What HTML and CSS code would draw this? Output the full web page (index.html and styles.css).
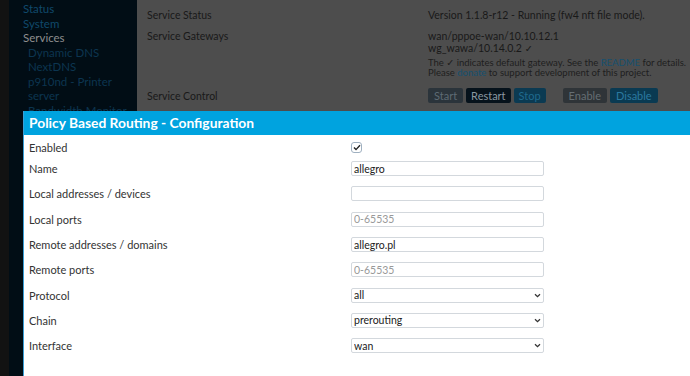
FILE: index.html
```html
<!DOCTYPE html>
<html lang="en">
<head>
    <meta charset="UTF-8">
    <title>Policy Based Routing</title>
    <link rel="stylesheet" href="styles.css">
</head>
<body>
    <div class="page">
        <div class="edge"></div>

        <nav class="sidebar">
            <a class="menu">Status</a>
            <a class="menu">System</a>
            <a class="menu active">Services</a>
            <a class="submenu">Dynamic DNS</a>
            <a class="submenu">NextDNS</a>
            <a class="submenu">p910nd - Printer</a>
            <a class="submenu">server</a>
            <a class="submenu">Bandwidth Monitor</a>
        </nav>

        <div class="main">
            <div class="status-row">
                <div class="status-label">Service Status</div>
                <div class="status-value">Version 1.1.8-r12 - Running (fw4 nft file mode).</div>
            </div>
            <div class="status-row gateways">
                <div class="status-label">Service Gateways</div>
                <div class="status-value">
                    <div>wan/pppoe-wan/10.10.12.1</div>
                    <div>wg_wawa/10.14.0.2 <span class="tick">✓</span></div>
                    <div class="note first">The <span class="tick">✓</span> indicates default gateway. See the <a class="link">README</a> for details.</div>
                    <div class="note">Please <a class="link">donate</a> to support development of this project.</div>
                </div>
            </div>
            <div class="status-row control">
                <div class="status-label">Service Control</div>
                <div class="status-value buttons">
                    <button class="btn btn-start">Start</button>
                    <button class="btn btn-restart">Restart</button>
                    <button class="btn btn-stop">Stop</button>
                    <button class="btn btn-enable spaced">Enable</button>
                    <button class="btn btn-disable">Disable</button>
                </div>
            </div>
        </div>
    </div>

    <div class="modal">
        <h3 class="modal-title">Policy Based Routing - Configuration</h3>
        <div class="form">
            <div class="row first-row">
                <label class="label">Enabled</label>
                <span class="checkbox">
                    <svg width="8" height="7" viewBox="0 0 8 7"><path d="M1 3.6 L3 5.6 L7 1.2" fill="none" stroke="#222" stroke-width="1.4"/></svg>
                </span>
            </div>
            <div class="row">
                <label class="label">Name</label>
                <input class="field" type="text" value="allegro">
            </div>
            <div class="row">
                <label class="label">Local addresses / devices</label>
                <input class="field" type="text">
            </div>
            <div class="row">
                <label class="label">Local ports</label>
                <input class="field" type="text" placeholder="0-65535">
            </div>
            <div class="row">
                <label class="label">Remote addresses / domains</label>
                <input class="field" type="text" value="allegro.pl">
            </div>
            <div class="row">
                <label class="label">Remote ports</label>
                <input class="field" type="text" placeholder="0-65535">
            </div>
            <div class="row">
                <label class="label">Protocol</label>
                <div class="select-wrap">
                    <select class="field select"><option>all</option></select>
                    <svg class="chevron" width="7" height="5" viewBox="0 0 7 5"><path d="M1 1.2 L3.5 3.6 L6 1.2" fill="none" stroke="#333" stroke-width="1.3"/></svg>
                </div>
            </div>
            <div class="row">
                <label class="label">Chain</label>
                <div class="select-wrap">
                    <select class="field select"><option>prerouting</option></select>
                    <svg class="chevron" width="7" height="5" viewBox="0 0 7 5"><path d="M1 1.2 L3.5 3.6 L6 1.2" fill="none" stroke="#333" stroke-width="1.3"/></svg>
                </div>
            </div>
            <div class="row">
                <label class="label">Interface</label>
                <div class="select-wrap">
                    <select class="field select"><option>wan</option></select>
                    <svg class="chevron" width="7" height="5" viewBox="0 0 7 5"><path d="M1 1.2 L3.5 3.6 L6 1.2" fill="none" stroke="#333" stroke-width="1.3"/></svg>
                </div>
            </div>
        </div>
    </div>
</body>
</html>
```

FILE: styles.css
```css
* {
    box-sizing: border-box;
}
body {
    margin: 0;
    width: 690px;
    height: 376px;
    overflow: hidden;
    background: #121212;
    font-family: "Lato", "DejaVu Sans", sans-serif;
    position: relative;
}
.page {
    display: flex;
    height: 376px;
}
.edge {
    width: 9px;
    background: #121212;
}

/* menu på venstre side */
.sidebar {
    width: 128px;
    background: #010d15;
    display: flex;
    flex-direction: column;
    padding: 2px 0 0 14px;
    overflow: hidden;
}
.sidebar a {
    display: block;
    font-size: 11.5px;
    line-height: 14.5px;
    white-space: nowrap;
}
.menu {
    color: #10496b;
}
.menu.active {
    color: #8e8e8e;
}
.submenu {
    color: #0c3550;
    padding-left: 5px;
}

/* hovedinnhold, dempet bak dialogen */
.main {
    flex: 1;
    background: #4d4d4d;
    padding: 9px 0 0 10px;
    color: #191919;
    font-size: 10.5px;
}
.status-row {
    display: grid;
    grid-template-columns: 281px 1fr;
    line-height: 12px;
}
.gateways {
    margin-top: 9px;
}
.note {
    font-size: 9.5px;
    line-height: 10px;
    color: #1e1e1e;
}
.note.first {
    margin-top: 3px;
}
.link {
    color: #16506f;
}
.tick {
    font-family: "DejaVu Sans", sans-serif;
    font-size: 9.5px;
}
.control {
    margin-top: 10px;
    align-items: center;
}
.buttons {
    display: flex;
    gap: 3px;
}
.btn {
    font-family: inherit;
    font-size: 11px;
    height: 15px;
    padding: 0 6px;
    border: none;
    border-radius: 2px;
    line-height: 15px;
}
.btn-start {
    background: #2b343b;
    color: #5e6b74;
}
.btn-restart {
    background: #06121b;
    color: #8a98a1;
    padding: 0 5px;
}
.btn-stop {
    background: #0b3a52;
    color: #1f6a8e;
    padding: 0 5px;
}
.btn-enable {
    background: #2f3438;
    color: #656e73;
}
.btn-disable {
    background: #0a3a52;
    color: #2a79a0;
}
.spaced {
    margin-left: 14px;
}

/* dialogen ligger over siden */
.modal {
    position: absolute;
    left: 23px;
    top: 111px;
    right: -20px;
    bottom: 0;
    background: #fff;
    border-left: 1px solid #3b9fd6;
}
.modal-title {
    margin: 0;
    height: 24px;
    line-height: 24px;
    background: #00a3df;
    color: #fff;
    font-size: 13.8px;
    font-weight: bold;
    padding-left: 5px;
}
.form {
    padding: 3px 0 0 5px;
}
.row {
    display: grid;
    grid-template-columns: 322px 193px;
    align-items: center;
    height: 25.3px;
}
.first-row {
    height: 18px;
}
.label {
    font-size: 11px;
    color: #333;
}
.checkbox {
    width: 11px;
    height: 11px;
    border: 1px solid #9fb0c0;
    border-radius: 3px;
    display: flex;
    align-items: center;
    justify-content: center;
}
.field {
    width: 193px;
    height: 15px;
    border: 1px solid #d3d8dd;
    border-radius: 2px;
    padding: 0 2px;
    font-family: inherit;
    font-size: 10.5px;
    color: #222;
    background: #fff;
    outline: none;
}
.field::placeholder {
    color: #999;
}
.select-wrap {
    position: relative;
    height: 15px;
}
.select {
    appearance: none;
    -webkit-appearance: none;
    display: block;
}
.chevron {
    position: absolute;
    right: 3px;
    top: 5px;
}
```
